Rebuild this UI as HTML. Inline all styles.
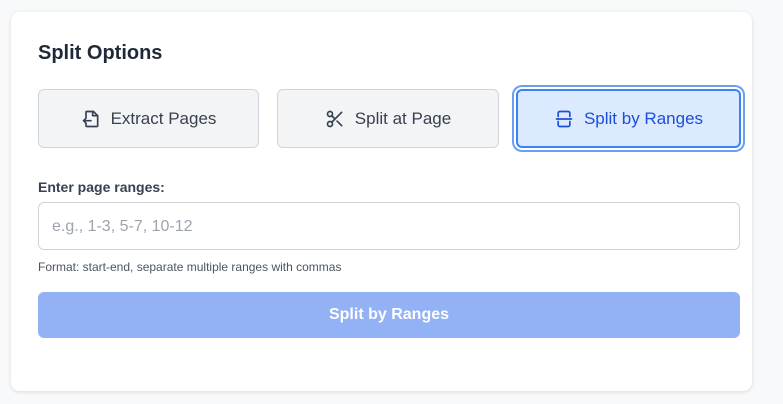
<!DOCTYPE html>
<html><head><style>
body{margin:0;width:783px;height:404px;background:#f8f9fa;font-family:"Liberation Sans",sans-serif;position:relative;overflow:hidden}
.card{position:absolute;left:11px;top:12px;width:741px;height:379px;background:#fff;border-radius:9px;box-shadow:0 1px 4px rgba(0,0,0,.12)}
h2{position:absolute;left:38px;top:42px;margin:0;font-size:20px;font-weight:600;color:#1f2937}
.b{position:absolute;top:89px;height:57px;border:1px solid #d1d5db;border-radius:6px;background:#f3f4f6;display:flex;align-items:center;justify-content:center;font-size:17px;color:#374151;gap:10px;box-sizing:border-box;height:59px}
.sel{background:#dbeafe;border:2px solid #3b82f6;color:#1d4ed8;box-shadow:0 0 0 2px #fff,0 0 0 4px #6b9ef0}
.lab{position:absolute;left:38px;top:179px;font-size:14px;font-weight:600;color:#374151}
.in{position:absolute;left:38px;top:202px;width:702px;height:48px;box-sizing:border-box;border:1px solid #d1d5db;border-radius:6px;font-size:16px;color:#9ca3af;padding:15px 0 0 13px}
.hint{position:absolute;left:38px;top:260px;font-size:12px;color:#4b5563}
.go{position:absolute;left:38px;top:292px;width:702px;height:46px;background:#93b2f5;border-radius:6px;color:#fff;font-weight:700;font-size:16px;display:flex;align-items:center;justify-content:center}
</style></head><body>
<div class="card"></div>
<h2>Split Options</h2>
<div class="b" style="left:38px;width:221px"><svg width="20" height="20" viewBox="0 0 24 24" fill="none" stroke="#374151" stroke-width="2" stroke-linecap="round" stroke-linejoin="round"><path d="M6 10V4a1 1 0 0 1 1-1h8l5 5v12a1 1 0 0 1-1 1H7a1 1 0 0 1-1-1v-3"/><path d="M14 3v5h5"/><path d="M12 14H3m3-3-3 3 3 3"/></svg>Extract Pages</div>
<div class="b" style="left:277px;width:222px"><svg width="20" height="20" viewBox="0 0 24 24" fill="none" stroke="#374151" stroke-width="2" stroke-linecap="round"><circle cx="6" cy="6" r="3"/><circle cx="6" cy="18" r="3"/><path d="M20 4 8.1 15.9M14.5 14.5 20 20M8.1 8.1 12 12"/></svg>Split at Page</div>
<div class="b sel" style="left:516px;width:225px"><svg width="20" height="20" viewBox="0 0 24 24" fill="none" stroke="#1d4ed8" stroke-width="2" stroke-linecap="round"><path d="M5 9V5a2 2 0 0 1 2-2h10a2 2 0 0 1 2 2v4M5 15v4a2 2 0 0 0 2 2h10a2 2 0 0 0 2-2v-4M3 12h18"/></svg>Split by Ranges</div>
<div class="lab">Enter page ranges:</div>
<div class="in">e.g., 1-3, 5-7, 10-12</div>
<div class="hint">Format: start-end, separate multiple ranges with commas</div>
<div class="go">Split by Ranges</div>
</body></html>
